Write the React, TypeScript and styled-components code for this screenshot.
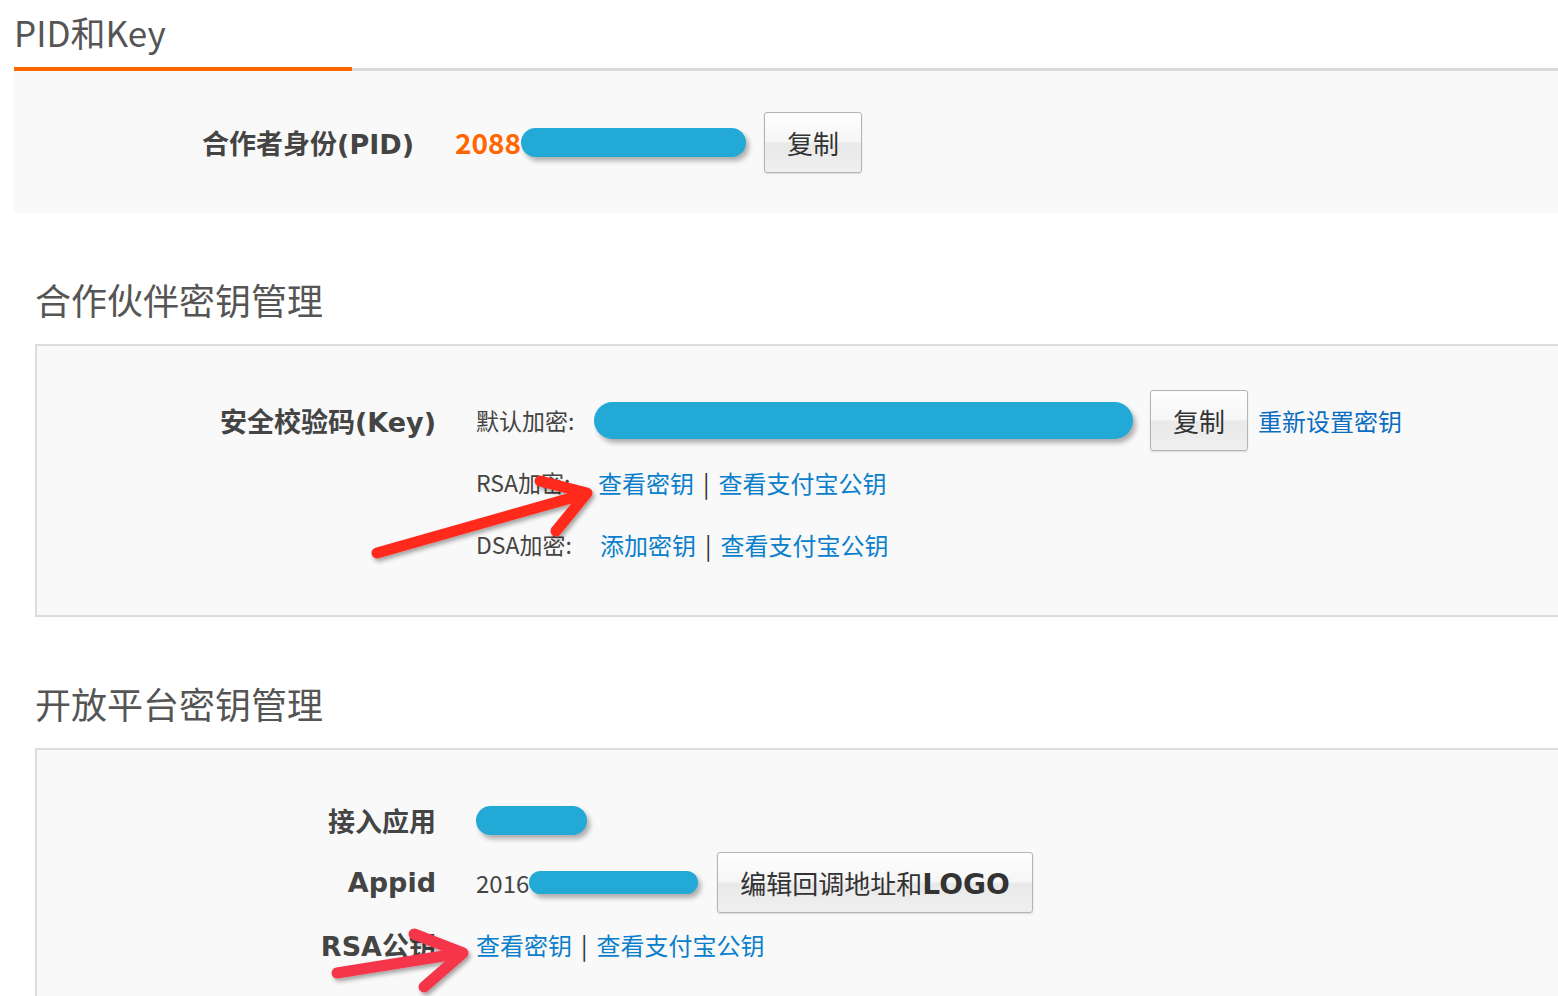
import React from 'react';
import styled, { createGlobalStyle } from 'styled-components';

const GlobalStyle = createGlobalStyle`
  html, body {
    margin: 0;
    padding: 0;
    background: #fff;
    overflow: hidden;
  }
  body {
    font-family: "Noto Sans CJK SC", "Noto Sans", sans-serif;
    color: #444;
  }
`;

const Page = styled.div`
  position: relative;
  width: 1558px;
  height: 996px;
  padding-left: 14px;
  box-sizing: border-box;
  overflow: hidden;
`;

const Title = styled.h1`
  margin: 0;
  padding-top: 10px;
  height: 44px;
  line-height: 44px;
  font-size: 35px;
  font-weight: 400;
  color: #555;
  margin-bottom: 13px;
`;

const TabLine = styled.div`
  display: flex;
  align-items: flex-end;
  height: 4px;
`;

const ActiveTab = styled.div`
  width: 338px;
  height: 4px;
  background: #ff6600;
`;

const TabRest = styled.div`
  flex: 1;
  height: 3px;
  background: #d9d9d9;
`;

const PidPanel = styled.div`
  height: 142px;
  background: #f9f9f9;
  display: grid;
  grid-template-columns: 400px 1fr;
  column-gap: 41px;
  align-items: center;
`;

const SectionTitle = styled.h2`
  margin: 62px 0 21px 21px;
  height: 48px;
  line-height: 48px;
  font-size: 36px;
  font-weight: 400;
  color: #555;
`;

const Box = styled.div<{ $top: number; $bottom: number }>`
  margin-left: 21px;
  border: 2px solid #dcdcdc;
  border-right: none;
  background: #f9f9f9;
  padding: ${(p) => p.$top}px 0 ${(p) => p.$bottom}px;
`;

const Row = styled.div`
  display: grid;
  grid-template-columns: 399px 1fr;
  column-gap: 40px;
  align-items: center;
  min-height: 62px;
`;

const Label = styled.div`
  text-align: right;
  font-family: "DejaVu Sans", "Noto Sans CJK SC", sans-serif;
  font-size: 27px;
  font-weight: 700;
  color: #444;
`;

const Value = styled.div`
  display: flex;
  align-items: center;
`;

const SubLabel = styled.span<{ $w: number }>`
  width: ${(p) => p.$w}px;
  font-size: 23px;
  color: #444;
  flex-shrink: 0;
`;

const Orange = styled.span`
  font-size: 28px;
  font-weight: 700;
  color: #ff6600;
`;

const PlainNum = styled.span`
  font-size: 24px;
  color: #444;
`;

const Pill = styled.span<{ $w: number; $h: number; $gap?: number }>`
  display: inline-block;
  width: ${(p) => p.$w}px;
  height: ${(p) => p.$h}px;
  border-radius: ${(p) => p.$h / 2}px;
  background: #22a9d5;
  box-shadow: 3px 4px 5px rgba(0, 0, 0, 0.3);
  margin-right: ${(p) => p.$gap ?? 18}px;
  flex-shrink: 0;
`;

const Button = styled.button`
  height: 61px;
  padding: 0 22px;
  font-family: inherit;
  font-size: 26px;
  color: #333;
  border: 1px solid #b4b4b4;
  border-radius: 3px;
  background: linear-gradient(#fefefe 0%, #f6f6f6 48%, #e9e9e9 52%, #efefef 100%);
  box-shadow: 0 1px 2px rgba(0, 0, 0, 0.12);
  cursor: pointer;
  flex-shrink: 0;

  b {
    font-family: "DejaVu Sans", sans-serif;
    font-weight: 700;
    font-size: 28px;
  }
`;

const Link = styled.a`
  font-size: 24px;
  color: #0a80cc;
  text-decoration: none;
  cursor: pointer;
`;

const ResetLink = styled(Link)`
  margin-left: 10px;
  color: #0a6dc0;
`;

const Sep = styled.span`
  font-size: 24px;
  color: #333;
  margin: 0 9px;
`;

const Overlay = styled.svg`
  position: absolute;
  left: 0;
  top: 0;
  pointer-events: none;
`;

function Arrows() {
  return (
    <Overlay width="1558" height="996" viewBox="0 0 1558 996">
      <defs>
        <filter id="sh" x="-20%" y="-20%" width="140%" height="140%">
          <feDropShadow dx="2" dy="3" stdDeviation="2" floodColor="#000" floodOpacity="0.35" />
        </filter>
      </defs>
      <g filter="url(#sh)" fill="none" strokeLinecap="round" strokeLinejoin="round">
        <g stroke="#ff2b1e" strokeWidth="11">
          <line x1="377" y1="553" x2="585" y2="494" />
          <polyline points="540,481 587,493 556,531" />
        </g>
        <g stroke="#f5364a" strokeWidth="11">
          <line x1="337" y1="973" x2="462" y2="953" />
          <polyline points="414,934 463,953 424,987" />
        </g>
      </g>
    </Overlay>
  );
}

function App() {
  return (
    <Page>
      <GlobalStyle />
      <Title>PID和Key</Title>
      <TabLine>
        <ActiveTab />
        <TabRest />
      </TabLine>
      <PidPanel>
        <Label>合作者身份(PID)</Label>
        <Value>
          <Orange>2088</Orange>
          <Pill $w={225} $h={29} />
          <Button>复制</Button>
        </Value>
      </PidPanel>

      <SectionTitle>合作伙伴密钥管理</SectionTitle>
      <Box $top={43} $bottom={40}>
        <Row>
          <Label>安全校验码(Key)</Label>
          <Value>
            <SubLabel $w={118}>默认加密:</SubLabel>
            <Pill $w={539} $h={37} $gap={17} />
            <Button>复制</Button>
            <ResetLink>重新设置密钥</ResetLink>
          </Value>
        </Row>
        <Row>
          <Label />
          <Value>
            <SubLabel $w={122}>RSA加密:</SubLabel>
            <Link>查看密钥</Link>
            <Sep>|</Sep>
            <Link>查看支付宝公钥</Link>
          </Value>
        </Row>
        <Row>
          <Label />
          <Value>
            <SubLabel $w={124}>DSA加密:</SubLabel>
            <Link>添加密钥</Link>
            <Sep>|</Sep>
            <Link>查看支付宝公钥</Link>
          </Value>
        </Row>
      </Box>

      <SectionTitle>开放平台密钥管理</SectionTitle>
      <Box $top={39} $bottom={40}>
        <Row>
          <Label>接入应用</Label>
          <Value>
            <Pill $w={111} $h={29} />
          </Value>
        </Row>
        <Row>
          <Label>Appid</Label>
          <Value>
            <PlainNum>2016</PlainNum>
            <Pill $w={169} $h={23} $gap={19} />
            <Button>
              编辑回调地址和<b>LOGO</b>
            </Button>
          </Value>
        </Row>
        <Row>
          <Label>RSA公钥</Label>
          <Value>
            <Link>查看密钥</Link>
            <Sep>|</Sep>
            <Link>查看支付宝公钥</Link>
          </Value>
        </Row>
      </Box>
      <Arrows />
    </Page>
  );
}

export default App;
